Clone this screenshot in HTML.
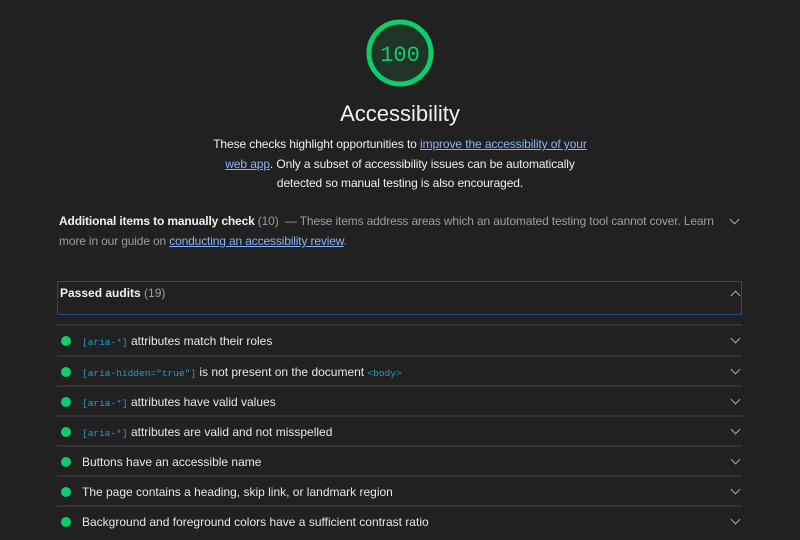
<!DOCTYPE html><html style="overflow:hidden;height:540px"><head><style>
body{margin:0;background:#212121;width:800px;height:540px;overflow:hidden;position:relative;font-family:"Liberation Sans",Arial,sans-serif;color:#e8e8e8;}
.g{position:absolute;left:365px;top:18px;}
.t{position:absolute;left:0;width:800px;top:101px;text-align:center;font-size:22px;color:#f0f0f0;}
.d{position:absolute;left:205px;width:390px;top:135px;text-align:center;font-size:12px;line-height:19.5px;color:#f0f0f0;letter-spacing:-0.1px;}
a{color:#8ab4f8;text-decoration:underline;}
.m{position:absolute;left:59px;width:672px;top:211px;font-size:12px;line-height:20px;color:#9e9e9e;letter-spacing:-0.15px;}
.m b{color:#f0f0f0;}
.chev{position:absolute;width:6px;height:6px;border-right:1.5px solid #aaa;border-bottom:1.5px solid #aaa;transform:rotate(45deg);}
.up{transform:rotate(-135deg);}
.pa{position:absolute;left:57px;top:281px;width:683px;height:32px;border:1px solid #1b4c9a;font-size:12px;}
.pa span{position:absolute;left:2px;top:4px;}
.row{position:absolute;left:57px;width:685px;height:28px;border-top:2px solid #333;font-size:12px;}
.row .dot{position:absolute;left:4px;top:10px;width:10px;height:10px;border-radius:50%;background:#0cce6b;}
.row .tx{position:absolute;left:25px;top:8px;white-space:nowrap;}
.row .chev{left:675px;top:9px;}
code{font-family:"Liberation Mono",monospace;font-size:9.5px;color:#1ea1c9;}
</style></head><body>
<svg class="g" width="70" height="70" viewBox="0 0 70 70"><circle cx="35" cy="35" r="31" fill="#1f3427" stroke="#0cce6b" stroke-width="5"/><text x="35" y="43" text-anchor="middle" font-family="Liberation Mono,monospace" font-size="22" fill="#0cce6b">100</text></svg>
<div class="t">Accessibility</div>
<div class="d">These checks highlight opportunities to <a>improve the accessibility of your web app</a>. Only a subset of accessibility issues can be automatically detected so manual testing is also encouraged.</div>
<div class="m"><b>Additional items to manually check</b> (10) &nbsp;— These items address areas which an automated testing tool cannot cover. Learn more in our guide on <a>conducting an accessibility review</a>.</div>
<div class="chev" style="left:731px;top:216px"></div>
<div class="pa"><span><b style="color:#f0f0f0">Passed audits</b> <span style="position:static;color:#9e9e9e">(19)</span></span><div class="chev up" style="left:674px;top:10px"></div></div>
<div class="row" style="top:324px"><div class="dot"></div><div class="tx"><code>[aria-*]</code> attributes match their roles</div><div class="chev"></div></div>
<div class="row" style="top:355px"><div class="dot"></div><div class="tx"><code>[aria-hidden="true"]</code> is not present on the document <code>&lt;body&gt;</code></div><div class="chev"></div></div>
<div class="row" style="top:385px"><div class="dot"></div><div class="tx"><code>[aria-*]</code> attributes have valid values</div><div class="chev"></div></div>
<div class="row" style="top:415px"><div class="dot"></div><div class="tx"><code>[aria-*]</code> attributes are valid and not misspelled</div><div class="chev"></div></div>
<div class="row" style="top:445px"><div class="dot"></div><div class="tx">Buttons have an accessible name</div><div class="chev"></div></div>
<div class="row" style="top:475px"><div class="dot"></div><div class="tx">The page contains a heading, skip link, or landmark region</div><div class="chev"></div></div>
<div class="row" style="top:505px"><div class="dot"></div><div class="tx">Background and foreground colors have a sufficient contrast ratio</div><div class="chev"></div></div>
</body></html>
